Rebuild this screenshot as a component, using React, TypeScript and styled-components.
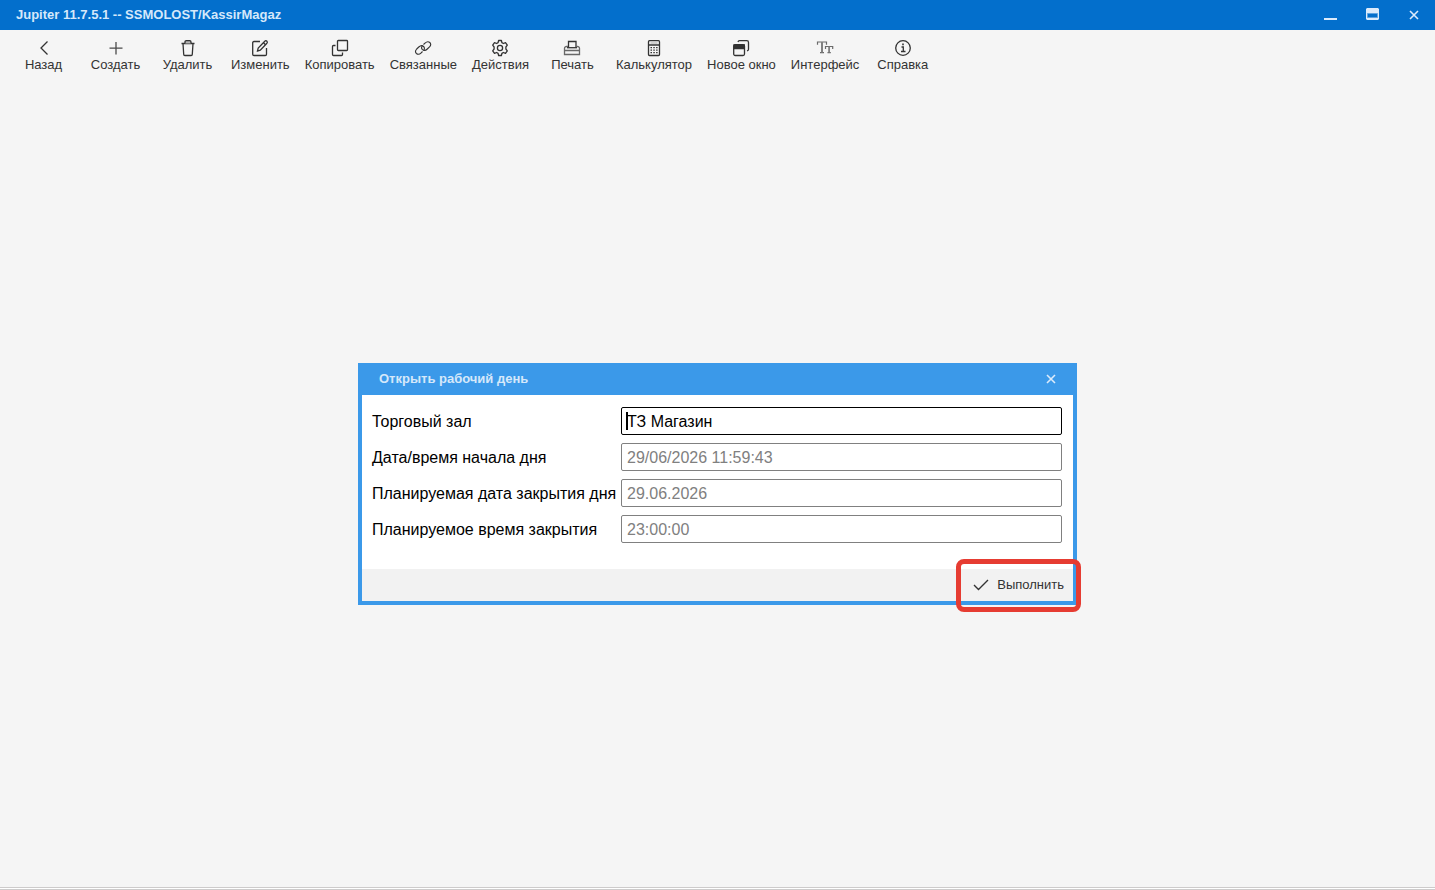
import React from "react";
import styled, { createGlobalStyle } from "styled-components";

const GlobalStyle = createGlobalStyle`
  * { box-sizing: border-box; }
  body {
    margin: 0;
    background: #f5f5f5;
    font-family: "Liberation Sans", Arial, sans-serif;
  }
`;

const Shell = styled.div`
  display: flex;
  flex-direction: column;
  min-height: 100vh;
`;

const TitleBar = styled.header`
  display: flex;
  align-items: center;
  justify-content: space-between;
  height: 30px;
  padding: 0 12px 0 16px;
  background: #036fcc;
  color: #d5e8fa;
`;

const AppTitle = styled.h1`
  margin: 0;
  font-size: 13px;
  line-height: 16px;
  font-weight: bold;
`;

const WindowControls = styled.div`
  display: flex;
  gap: 24px;
`;

const IconButton = styled.button`
  display: flex;
  align-items: center;
  justify-content: center;
  width: 18px;
  height: 24px;
  padding: 0;
  border: 0;
  background: none;
  color: #dcebfb;
`;

const Toolbar = styled.nav`
  display: flex;
  height: 50px;
  padding: 9px 8px 0;
`;

const ToolButton = styled.button`
  display: flex;
  flex-direction: column;
  align-items: center;
  min-width: 72px;
  height: 34px;
  padding: 0 8px 0 7px;
  border: 0;
  background: none;
  color: #333333;
  font: 13px/16px "Liberation Sans", Arial, sans-serif;
  white-space: nowrap;
`;

const Workspace = styled.main`
  flex: 1;
  display: flex;
  align-items: center;
  justify-content: center;
`;

const DialogWindow = styled.section`
  width: 719px;
  max-width: 100%;
  border: 4px solid #3b99e9;
  border-top: 0;
  background: #ffffff;
`;

const DialogHeader = styled.div`
  display: flex;
  align-items: center;
  justify-content: space-between;
  height: 32px;
  padding: 1px 13px 0 17px;
  background: #3b99e9;
  color: #d5e8fa;
`;

const DialogTitle = styled.h2`
  margin: 0;
  font-size: 13px;
  line-height: 16px;
  font-weight: bold;
`;

const Form = styled.form`
  display: grid;
  grid-template-columns: 238px 1fr;
  column-gap: 11px;
  row-gap: 8px;
  padding: 12px 11px 26px 10px;
`;

const Label = styled.label`
  height: 28px;
  font-size: 16px;
  line-height: 30px;
  color: #000000;
  white-space: nowrap;
`;

const Field = styled.div<{ $active?: boolean }>`
  position: relative;
  display: flex;

  &::before {
    content: "";
    display: ${(p) => (p.$active ? "block" : "none")};
    position: absolute;
    left: 5px;
    top: 5px;
    width: 2px;
    height: 18px;
    background: #000000;
  }
`;

const TextInput = styled.input<{ $active?: boolean }>`
  width: 100%;
  height: 28px;
  padding: 2px 5px 0;
  border: 1px solid ${(p) => (p.$active ? "#000000" : "#808080")};
  border-radius: 2px;
  outline: none;
  background: #ffffff;
  color: ${(p) => (p.$active ? "#000000" : "#808080")};
  font: 16px "Liberation Sans", Arial, sans-serif;
`;

const DialogFooter = styled.div`
  position: relative;
  display: flex;
  justify-content: flex-end;
  height: 32px;
  padding-right: 9px;
  background: #f2f2f2;
`;

const SubmitButton = styled.button`
  display: flex;
  align-items: center;
  gap: 8px;
  padding: 1px 0 0;
  border: 0;
  background: none;
  color: #333333;
  font: 13px/16px "Liberation Sans", Arial, sans-serif;
`;

const Highlight = styled.div`
  position: absolute;
  top: -10px;
  right: -8px;
  width: 125px;
  height: 53px;
  border: 5px solid #e63c32;
  border-radius: 8px;
  pointer-events: none;
`;

const StatusBar = styled.footer`
  height: 3px;
  border: solid #cdcbcb;
  border-width: 1px 0;
  background: #ffffff;
`;

const ToolIcon = ({ children }: { children: React.ReactNode }) => (
  <svg width="18" height="18" viewBox="0 0 18 18" fill="none" stroke="#333333" strokeWidth="1.3" aria-hidden="true">
    {children}
  </svg>
);

const CloseIcon = () => (
  <svg width="10" height="10" viewBox="0 0 10 10" fill="none" stroke="currentColor" strokeWidth="1.6" aria-hidden="true">
    <path d="M1 1l8 8M9 1L1 9" />
  </svg>
);

const tools: { label: string; icon: React.ReactNode }[] = [
  { label: "Назад", icon: <path d="M12.5 2.5L6 9l6.500 6.500" /> },
  { label: "Создать", icon: <path d="M9 3v12.500M2.500 9.200h13" stroke="#4a4a4a" strokeWidth="1.300" /> },
  {
    label: "Удалить",
    icon: (
      <>
        <path d="M2.500 4.500h13M4 4.500l.7 10.800c0 .8.500 1.200 1.200 1.200h6.200c.7 0 1.200-.4 1.200-1.200L14 4.500" />
        <path d="M6 4.500V3c0-.8.500-1.300 1.300-1.300h3.400c.8 0 1.300.5 1.300 1.300v1.500" fill="#b5b5b5" />
      </>
    ),
  },
  {
    label: "Изменить",
    icon: (
      <>
        <path d="M9 2.500H3c-.9 0-1.300.5-1.300 1.300v11.400c0 .9.500 1.300 1.300 1.300h11.200c.9 0 1.300-.5 1.300-1.300V9" />
        <path d="M6.500 12l.7-3L13.800 2.200c.7-.7 1.500-.6 2.100 0 .6.600.6 1.300 0 2L9.300 11.200z" />
        <path d="M12.500 3.700l2 2" />
      </>
    ),
  },
  {
    label: "Копировать",
    icon: (
      <>
        <rect x="6.500" y="1.500" width="10" height="10" rx="0.800" />
        <path d="M4.500 6.500H2.500c-.6 0-1 .4-1 1v8c0 .6.400 1 1 1h8c.6 0 1-.4 1-1v-2" />
      </>
    ),
  },
  {
    label: "Связанные",
    icon: (
      <g strokeWidth="1.1">
        <path d="M8.500 12.500l-1.300 1.300c-1.500 1.500-3.500 1.700-4.800.7-1.300-1.200-1-3 .3-4.500l2.100-2c1.600-1.500 3.600-1.600 4.800-.5 1.200 1.100 1 2.900-.1 4" />
        <path d="M9.500 5.500l1.500-1.400c1.500-1.400 3.500-1.700 4.800-.6 1.200 1.200 1 3-.3 4.400l-2.200 2.100c-1.500 1.500-3.500 1.700-4.800.6-1.200-1.200-1-2.900.1-4.100" />
      </g>
    ),
  },
  {
    label: "Действия",
    icon: (
      <>
        <path d="M7.100 3.600L7.600 1.500h2.800l.5 2.100 1.500.9 2.100-.8 1.800 2.500L14.900 8v2l1.400 1.800-1.800 2.500-2.100-.8-1.500.9-.5 2.100H7.600l-.5-2.100-1.500-.9-2.100.8-1.800-2.500L3.100 10V8L1.700 6.200l1.800-2.500 2.100.8z" strokeLinejoin="round" />
        <circle cx="9" cy="9" r="2.600" />
      </>
    ),
  },
  {
    label: "Печать",
    icon: (
      <>
        <path d="M5.500 8.500v-6h7.500v6" />
        <path d="M5 7.500H3.500c-1 0-2 .7-2 1.700v6.300h15V9.200c0-1-1-1.700-2-1.700H13M1.500 11.500h15" stroke="#686868" strokeWidth="1.300" />
        <path d="M4 8.700h10" />
      </>
    ),
  },
  {
    label: "Калькулятор",
    icon: (
      <>
        <rect x="3.500" y="1.700" width="11" height="14.800" rx="1" />
        <path d="M4 6h10" strokeWidth="1.500" />
        <path d="M5.500 4h7" stroke="#bbbbbb" />
        <path d="M5.500 8.700h7.500M5.500 11.200h7.500M5.500 13.700h7.500" strokeDasharray="1.500 1.300" />
      </>
    ),
  },
  {
    label: "Новое окно",
    icon: (
      <>
        <rect x="1.700" y="5.700" width="10.800" height="10.800" rx="1.500" />
        <path d="M2 6h10.300v3.500H2z" fill="#333333" />
        <path d="M6 3c.2-.9.700-1.300 1.500-1.300h7.300c1 0 1.700.6 1.700 1.700v6.800c0 1-.5 1.500-1.500 1.700" />
      </>
    ),
  },
  {
    label: "Интерфейс",
    icon: (
      <g stroke="#6a6a6a" strokeWidth="1.200">
        <path d="M1.500 5.800V3h9v2.800M4 13.700h4" />
        <path d="M6 3v10.500" stroke="#808080" strokeWidth="2" />
        <path d="M9.500 10V7.500h7.200V10M11.500 13.700h3.300" />
        <path d="M13.100 7.500v6" stroke="#808080" strokeWidth="1.800" />
      </g>
    ),
  },
  {
    label: "Справка",
    icon: (
      <>
        <circle cx="9" cy="9" r="7.300" />
        <path d="M7.500 8h1.800v4.500M7 12.500h4.500" />
        <path d="M8.200 5.300h1.600" strokeWidth="1.700" />
      </>
    ),
  },
];

const fields = [
  { id: "hall", label: "Торговый зал", value: "ТЗ Магазин", active: true },
  { id: "start", label: "Дата/время начала дня", value: "29/06/2026 11:59:43" },
  { id: "closeDate", label: "Планируемая дата закрытия дня", value: "29.06.2026" },
  { id: "closeTime", label: "Планируемое время закрытия", value: "23:00:00" },
];

export default function App() {
  return (
    <Shell>
      <GlobalStyle />
      <TitleBar>
        <AppTitle>Jupiter 11.7.5.1 -- SSMOLOST/KassirMagaz</AppTitle>
        <WindowControls>
          <IconButton type="button" aria-label="Свернуть">
            <svg width="14" height="14" viewBox="0 0 14 14" aria-hidden="true">
              <path d="M1 10h13v2H1z" fill="currentColor" />
            </svg>
          </IconButton>
          <IconButton type="button" aria-label="Развернуть">
            <svg width="14" height="14" viewBox="0 0 14 14" aria-hidden="true">
              <path d="M2 0h11l1 1v10l-1 1H2l-1-1V1z" fill="currentColor" />
              <path d="M2.500 5.500h10v4h-10z" fill="#036fcc" stroke="#5ea3e0" />
            </svg>
          </IconButton>
          <IconButton type="button" aria-label="Закрыть">
            <CloseIcon />
          </IconButton>
        </WindowControls>
      </TitleBar>
      <Toolbar>
        {tools.map((tool) => (
          <ToolButton key={tool.label} type="button">
            <ToolIcon>{tool.icon}</ToolIcon>
            {tool.label}
          </ToolButton>
        ))}
      </Toolbar>
      <Workspace>
        <DialogWindow role="dialog" aria-labelledby="dialog-title">
          <DialogHeader>
            <DialogTitle id="dialog-title">Открыть рабочий день</DialogTitle>
            <IconButton type="button" aria-label="Закрыть окно">
              <CloseIcon />
            </IconButton>
          </DialogHeader>
          <Form id="day-form" onSubmit={(e) => e.preventDefault()}>
            {fields.map((f) => (
              <React.Fragment key={f.id}>
                <Label htmlFor={f.id}>{f.label}</Label>
                <Field $active={f.active}>
                  <TextInput id={f.id} defaultValue={f.value} readOnly={!f.active} $active={f.active} />
                </Field>
              </React.Fragment>
            ))}
          </Form>
          <DialogFooter>
            <SubmitButton type="submit" form="day-form">
              <svg width="16" height="16" viewBox="0 0 16 16" fill="none" stroke="#333333" strokeWidth="1.400" aria-hidden="true">
                <path d="M1 8l4.500 4.500L15 3" />
              </svg>
              Выполнить
            </SubmitButton>
            <Highlight />
          </DialogFooter>
        </DialogWindow>
      </Workspace>
      <StatusBar />
    </Shell>
  );
}
